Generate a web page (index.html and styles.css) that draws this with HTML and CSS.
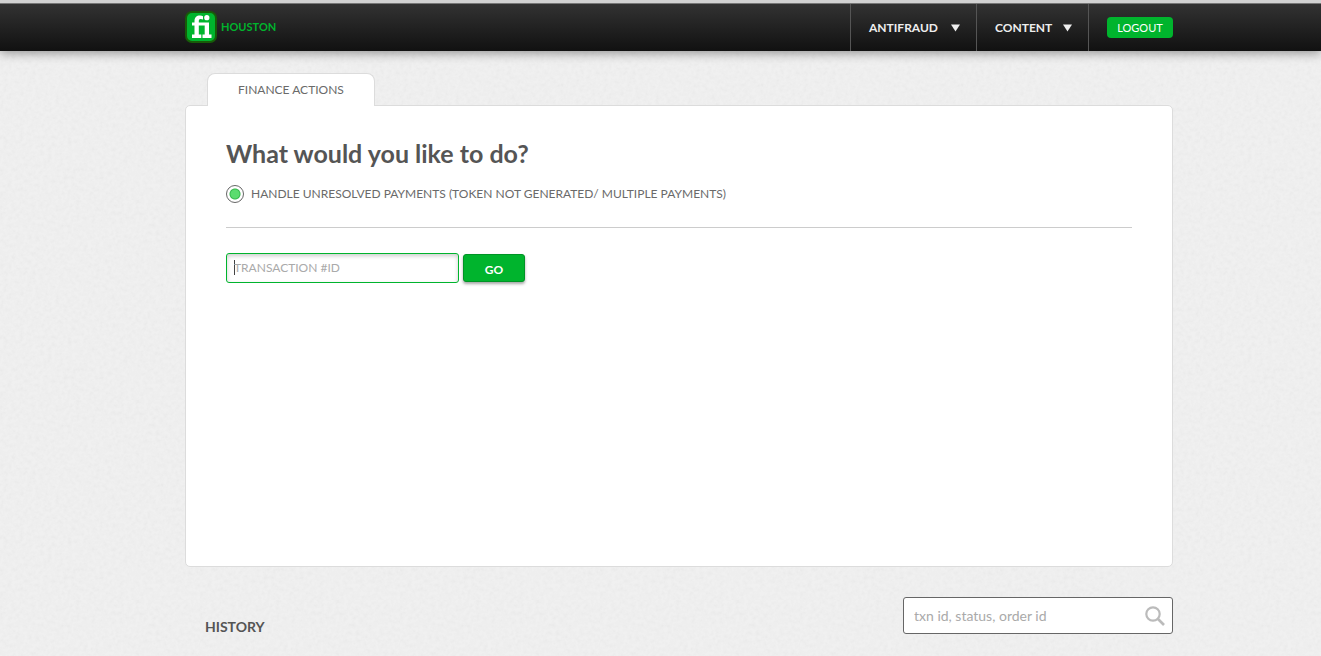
FILE: index.html
```html
<!DOCTYPE html>
<html lang="en">
<head>
<meta charset="utf-8">
<title>Houston - Finance Actions</title>
<link rel="stylesheet" href="styles.css">
</head>
<body>
<header class="topbar">
  <a class="brand" href="#">
    <svg class="brand-logo" width="32" height="32" viewBox="0 0 32 32" aria-hidden="true">
      <rect x="1" y="1" width="30" height="30" rx="6" fill="#00b42d" stroke="#175c08" stroke-width="2"/>
      <path fill="#fff" d="M7 27V23.500H9.500V14.500H7V11.500H9.500V10C9.500 6.500 11.500 4.500 15 4.500C16.300 4.500 17.300 4.800 18 5.200V8.500C17.300 8.100 16.500 7.900 15.700 7.900C14.300 7.900 13.800 8.700 13.800 10V11.500H24V23.500H26.500V27H17.500V23.500H19.700V14.500H13.800V23.500H16.300V27Z"/>
      <circle cx="21.800" cy="6.700" r="2.600" fill="#fff"/>
    </svg>
    <span>HOUSTON</span>
  </a>
  <nav class="menu">
    <button class="menu-item menu-item-wide" type="button">ANTIFRAUD
      <svg width="9" height="8" viewBox="0 0 9 8" aria-hidden="true"><path d="M0 0.500H9L4.500 7.500Z" fill="#eee"/></svg>
    </button>
    <button class="menu-item" type="button">CONTENT
      <svg width="9" height="8" viewBox="0 0 9 8" aria-hidden="true"><path d="M0 0.500H9L4.500 7.500Z" fill="#eee"/></svg>
    </button>
    <div class="menu-end"><button class="logout" type="button">LOGOUT</button></div>
  </nav>
</header>
<main class="page">
  <div class="tabs"><a class="tab" href="#actions">FINANCE ACTIONS</a></div>
  <section class="panel" id="actions">
    <h1 class="title">What would you like to do?</h1>
    <label class="option">
      <input class="radio" type="radio" name="action" checked>
      <span>HANDLE UNRESOLVED PAYMENTS (TOKEN NOT GENERATED/ MULTIPLE PAYMENTS)</span>
    </label>
    <form class="lookup">
      <input class="txn" type="text" placeholder="TRANSACTION #ID" aria-label="Transaction ID">
      <button class="go" type="button">GO</button>
    </form>
  </section>
  <section class="history">
    <h2 class="history-title">HISTORY</h2>
    <label class="search">
      <input class="search-input" type="text" placeholder="txn id, status, order id" aria-label="Search history">
      <svg width="20" height="20" viewBox="0 0 20 20" fill="none" stroke="#bbb" aria-hidden="true">
        <circle cx="8" cy="8" r="6.700" stroke-width="2.200"/>
        <path d="M13 13L19 19" stroke-width="2.600"/>
      </svg>
    </label>
  </section>
</main>
</body>
</html>
```
FILE: styles.css
```css
* { box-sizing: border-box; }

body {
  margin: 0;
  min-height: 100vh;
  font-family: Lato, "Open Sans", sans-serif;
  font-size: 12px;
  line-height: 16px;
  color: #555;
  background: #f0f0f0 url("data:image/svg+xml,%3Csvg xmlns='http://www.w3.org/2000/svg' width='200' height='200'%3E%3Cfilter id='n'%3E%3CfeTurbulence type='fractalNoise' baseFrequency='.25' numOctaves='3' stitchTiles='stitch'/%3E%3CfeColorMatrix values='0 0 0 0 .5 0 0 0 0 .5 0 0 0 0 .5 .2 0 0 0 -.07'/%3E%3C/filter%3E%3Crect width='200' height='200' filter='url(%23n)'/%3E%3C/svg%3E");
}

button, input { font: inherit; margin: 0; }
a { text-decoration: none; color: inherit; }

.topbar {
  display: flex;
  justify-content: space-between;
  height: 51px;
  padding: 0 148px 0 185px;
  border-top: 3px solid #d2d2d2;
  background: linear-gradient(#333, #111);
  box-shadow: inset 0 1px #777, 0 2px 10px rgba(0, 0, 0, .4);
}

.brand {
  display: flex;
  align-items: center;
  gap: 4px;
  color: #00b42d;
  font-size: 11px;
  line-height: 14px;
  font-weight: 700;
}

.menu { display: flex; }

.menu-item {
  display: flex;
  align-items: center;
  justify-content: space-between;
  width: 112px;
  margin-top: 1px;
  padding: 0 16px 0 18px;
  border: 0;
  border-left: 1px solid #555;
  background: none;
  color: #eee;
  font-weight: 700;
}

.menu-item-wide { width: 126px; }

.menu-end {
  display: flex;
  align-items: center;
  margin-top: 1px;
  padding-left: 18px;
  border-left: 1px solid #555;
}

.logout {
  width: 66px;
  height: 21px;
  padding: 0;
  border: 0;
  border-radius: 4px;
  background: #00b42d;
  color: #fff;
  font-size: 11px;
}

.page { padding: 22px 148px 20px 185px; }

.tabs { display: flex; padding-left: 22px; }

.tab {
  position: relative;
  margin-bottom: -1px;
  padding: 8px 30px;
  border: 1px solid #dcdcdc;
  border-bottom: 0;
  border-radius: 8px 8px 0 0;
  background: #fff;
  color: #6a6a6a;
}

.panel {
  min-height: 462px;
  padding: 31px 40px;
  border: 1px solid #dcdcdc;
  border-radius: 5px;
  background: #fff;
}

.title {
  margin: 0 0 16px;
  font-size: 25px;
  line-height: 32px;
  font-weight: 700;
}

.option {
  display: flex;
  align-items: center;
  gap: 7px;
  color: #6a6a6a;
}

.radio {
  appearance: none;
  width: 18px;
  height: 18px;
  border: 1px solid #666;
  border-radius: 50%;
  background: #fff;
}

.radio:checked {
  background: radial-gradient(circle, #5bdc6e 4px, #35b84b 5px, #fff 6px);
}

.lookup {
  display: flex;
  align-items: center;
  gap: 4px;
  margin-top: 24px;
  padding-top: 25px;
  border-top: 1px solid #ccc;
}

.txn {
  width: 233px;
  height: 30px;
  padding: 0 7px 2px;
  border: 1px solid #00b42d;
  border-radius: 3px;
  background: linear-gradient(#444, #444) 7px 6px / 1px 15px no-repeat #fff;
  box-shadow: inset 0 2px 4px rgba(0, 0, 0, .2);
  outline: 0;
}

.txn::placeholder { color: #aaa; opacity: 1; }

.go {
  width: 62px;
  height: 28px;
  padding: 3px 0 0;
  border: 1px solid #009426;
  border-radius: 3px;
  background: #00b42d;
  box-shadow: 0 2px 3px rgba(0, 0, 0, .35);
  color: #fff;
  font-weight: 700;
}

.history {
  display: flex;
  justify-content: space-between;
  align-items: flex-end;
  padding: 30px 0 0 20px;
}

.history-title {
  margin: 0;
  font-size: 14px;
  line-height: 14px;
  font-weight: 700;
}

.search {
  display: flex;
  align-items: center;
  width: 270px;
  height: 37px;
  padding: 0 7px 0 10px;
  border: 1px solid #666;
  border-radius: 3px;
  background: #fff;
}

.search-input {
  flex: 1;
  min-width: 0;
  padding: 0;
  border: 0;
  outline: 0;
  background: none;
  font-size: 14px;
}

.search-input::placeholder { color: #aaa; opacity: 1; }
```
